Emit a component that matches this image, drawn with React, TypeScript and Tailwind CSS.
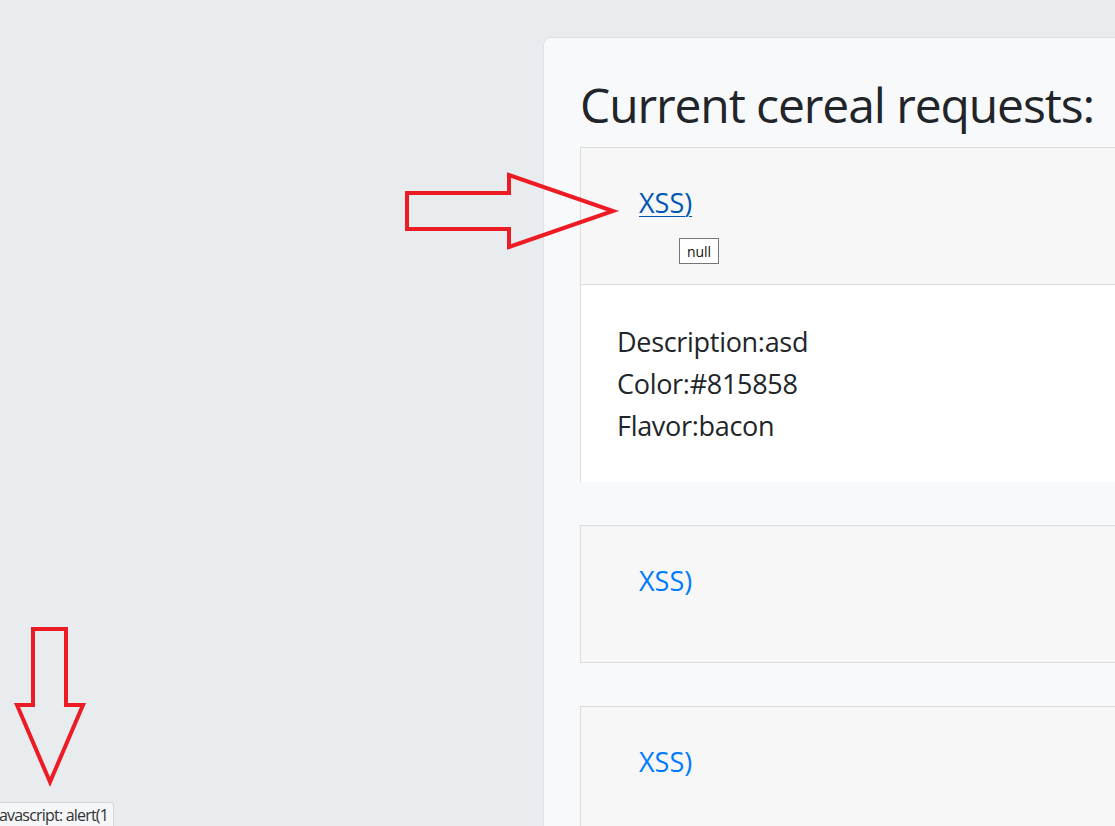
import React from 'react';

const requests = [
    { title: 'XSS)', open: true, description: 'asd', color: '#815858', flavor: 'bacon' },
    { title: 'XSS)', open: false },
    { title: 'XSS)', open: false },
];

const RightArrow = () => (
    <svg className="absolute left-[400px] top-[168px]" width="222" height="86" viewBox="0 0 222 86">
        <polygon
            points="7,25 109,25 109,7 213,43 109,79 109,61 7,61"
            fill="none"
            stroke="#ed1c24"
            strokeWidth="4"
            strokeLinejoin="miter"
        />
    </svg>
);

const DownArrow = () => (
    <svg className="absolute left-0 top-[620px]" width="100" height="170" viewBox="0 0 100 170">
        <polygon
            points="33,9 66,9 66,85 83,85 50,162 17,85 33,85"
            fill="none"
            stroke="#ed1c24"
            strokeWidth="4"
        />
    </svg>
);

export default function App() {
    return (
        <div className="relative h-[826px] overflow-hidden bg-[#e9ecef] font-['Open_Sans',sans-serif] text-[#212529]">
            <div className="pl-[543px] pt-[37px]">
                <div className="w-[700px] rounded-tl-lg border border-[#dee2e6] bg-[#f8f9fa] pl-[36px] pt-[37px]">
                    <h1 className="mb-[12px] whitespace-nowrap text-[48px] leading-[60px] tracking-[-1.1px]">Current cereal requests:</h1>
                    {requests.map((req, i) => (
                        <div key={i} className="mb-[43px] border border-b-0 border-[#dadbdc]">
                            <div className="h-[137px] border-b border-[#dadbdc] bg-[#f7f7f7] pl-[58px] pt-[35px]">
                                <a
                                    href="#"
                                    className={`text-[27px] leading-[40px] ${req.open ? 'text-[#0056b3] underline decoration-1 underline-offset-[3px]' : 'text-[#007bff]'}`}
                                >
                                    {req.title}
                                </a>
                                {req.open && (
                                    <div className="ml-[40px] mt-[15px] flex h-[26px] w-[40px] items-center justify-center border border-[#767676] bg-white text-[14px] text-[#111]">
                                        null
                                    </div>
                                )}
                            </div>
                            {req.open && (
                                <div className="h-[197px] bg-white pl-[36px] pt-[36px] text-[27px] leading-[42px] tracking-[-0.3px]">
                                    <div>Description:{req.description}</div>
                                    <div>Color:{req.color}</div>
                                    <div>Flavor:{req.flavor}</div>
                                </div>
                            )}
                        </div>
                    ))}
                </div>
            </div>

            <RightArrow />
            <DownArrow />

            <div className="absolute bottom-0 left-0 flex h-[24px] w-[114px] items-center overflow-hidden rounded-tr-sm border-t border-r border-[#d6d6d6] bg-[#f5f6f7] text-[16px] tracking-[-0.8px] text-[#333] whitespace-nowrap">
                <span className="-ml-[1px]">avascript: alert(1</span>
            </div>
        </div>
    );
}
